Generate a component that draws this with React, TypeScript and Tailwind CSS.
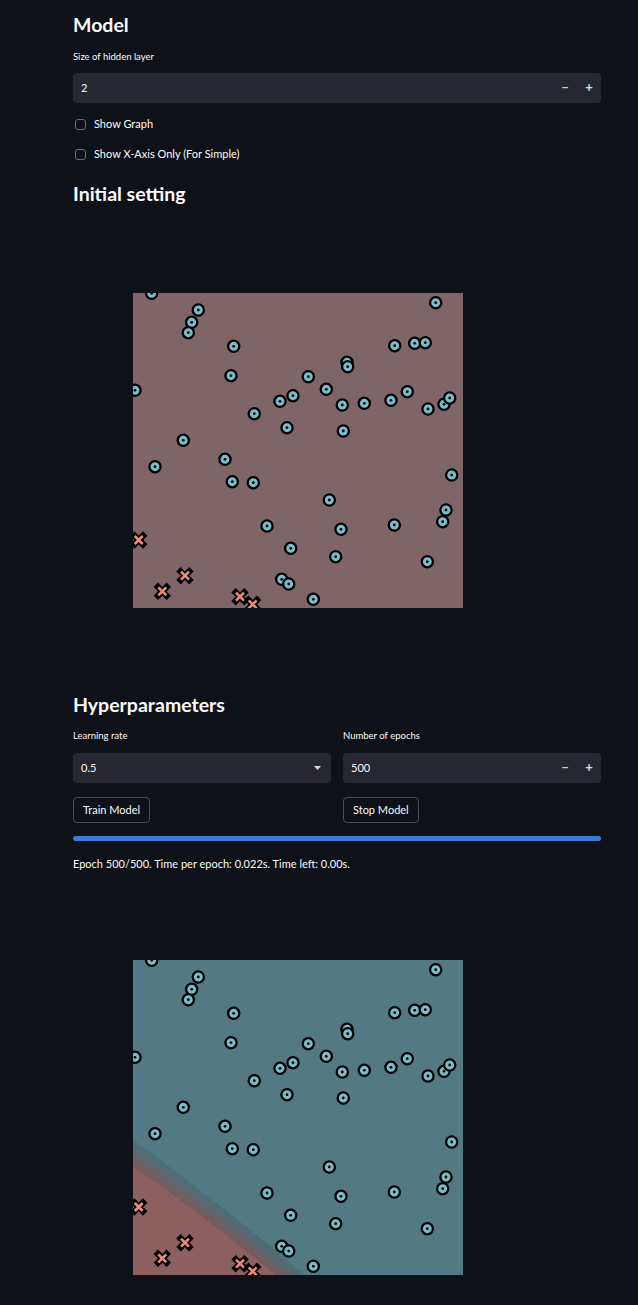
import React from "react";

const CIRCLES: [number, number][] = [
  [151.7, 293.3], [198.3, 310], [191.7, 322.3], [188.3, 332.7], [233.7, 346.3], [231, 375.7],
  [135, 390.3], [435.7, 302.7], [394.7, 345.7], [414.7, 343.3], [425.3, 342.7], [347, 362.3],
  [347.7, 366.7], [308.3, 376.7], [326.3, 389.3], [293, 395.7], [280, 401.3], [254.3, 413.7],
  [342.3, 405], [364.3, 403.3], [391, 400.3], [407.3, 391.7], [428, 409], [444, 404.3],
  [449.7, 398], [287, 427.7], [343.3, 431], [183.3, 440.3], [225, 459.3], [155, 466.7],
  [451.7, 475], [232.3, 481.7], [253.3, 482.7], [329.3, 500], [446, 510], [442.7, 521.7],
  [267, 526], [341, 529.3], [394.3, 525], [290.7, 548.3], [335.7, 556.7], [427.3, 561.7],
  [281.7, 579.3], [288.7, 584], [313.3, 599.3],
];

const CROSSES: [number, number][] = [
  [138.7, 540], [185, 575.7], [162.3, 591.3], [240, 596.7], [252.7, 604.3],
];

const OX = 133;
const OY = 293;

function Markers() {
  return (
    <>
      {CIRCLES.map(([x, y], i) => (
        <g key={"c" + i} transform={`translate(${x - OX} ${y - OY})`}>
          <circle r={5.6} fill="#7bbccb" stroke="#000" strokeWidth={2.3} />
          <circle r={1.4} fill="#000" />
        </g>
      ))}
      {CROSSES.map(([x, y], i) => (
        <g key={"x" + i} transform={`translate(${x - OX} ${y - OY})`}>
          <path d="M-4.3 -4.3 L4.3 4.3 M-4.3 4.3 L4.3 -4.3" stroke="#000" strokeWidth={6.2} strokeLinecap="square" />
          <path d="M-4 -4 L4 4 M-4 4 L4 -4" stroke="#ee8a80" strokeWidth={2.6} strokeLinecap="butt" />
        </g>
      ))}
    </>
  );
}

function lerpColor(a: number[], b: number[], t: number) {
  const c = a.map((v, i) => Math.round(v + (b[i] - v) * t));
  return `rgb(${c[0]},${c[1]},${c[2]})`;
}

function Plot({ trained }: { trained: boolean }) {
  const red = [140, 95, 96];
  const teal = [83, 121, 133];
  const layers = [];
  const lines = [];
  const N = 14;
  for (let i = 0; i <= N; i++) {
    const t = i / N;
    const y0 = 179 + t * 25;
    const x1 = 172 - t * 27;
    const d = `M-2 ${y0} Q ${x1 * 0.5} ${y0 + (315 - y0) * 0.47} ${x1} 316`;
    layers.push(
      <path key={"l" + i} d={`${d} L-2 316 Z`} fill={lerpColor(teal, red, t)} />
    );
    lines.push(
      <path key={"s" + i} d={d} stroke="#34454e" strokeOpacity={0.45} strokeWidth={0.7} fill="none" />
    );
  }
  return (
    <div className="ml-[60px] h-[315px] w-[330px] overflow-hidden">
      <svg width={330} height={315} viewBox="0 0 330 315" className="block">
        {trained ? (
          <>
            <rect width={330} height={315} fill="#537985" />
            {layers}
            {lines}
          </>
        ) : (
          <rect width={330} height={315} fill="#7f6568" />
        )}
        <Markers />
      </svg>
    </div>
  );
}

function Stepper({ value }: { value: string }) {
  return (
    <div className="flex h-[30px] items-center rounded-[4px] bg-[#262730] pl-[8px] text-[11px] text-[#fafafa]">
      <span className="flex-1">{value}</span>
      <span className="w-[24px] text-center text-[13px] font-bold text-[#d0d0d0]">−</span>
      <span className="w-[24px] text-center text-[13px] font-bold text-[#e0e0e0]">+</span>
    </div>
  );
}

function Check({ label }: { label: string }) {
  return (
    <div className="flex h-[14px] items-center gap-[8px]">
      <span className="ml-[2px] h-[11px] w-[11px] rounded-[3px] border border-[#6b6e78]" />
      <span className="text-[11px] text-[#fafafa]">{label}</span>
    </div>
  );
}

export default function App() {
  return (
    <div
      className="min-h-[1305px] w-[638px] bg-[#0e1117] text-[#fafafa]"
      style={{ fontFamily: "Lato, 'Noto Sans', sans-serif" }}
    >
      <div className="flex flex-col pl-[73px] pr-[37px] pt-[13px]">
        <div className="h-[24px] text-[19.5px] font-bold leading-[24px]">Model</div>
        <div className="mt-[14px] h-[12px] text-[9.5px] leading-[12px]">Size of hidden layer</div>
        <div className="mt-[10px]">
          <Stepper value="2" />
        </div>
        <div className="mt-[14px]">
          <Check label="Show Graph" />
        </div>
        <div className="mt-[16px]">
          <Check label="Show X-Axis Only (For Simple)" />
        </div>
        <div className="mt-[21px] h-[24px] text-[19.5px] font-bold leading-[24px]">Initial setting</div>
        <div className="mt-[87px]">
          <Plot trained={false} />
        </div>
        <div className="mt-[85px] h-[24px] text-[19.5px] font-bold leading-[24px]">Hyperparameters</div>
        <div className="mt-[13px] grid grid-cols-2 gap-x-[12px]">
          <div className="flex flex-col">
            <div className="h-[12px] text-[9.5px] leading-[12px]">Learning rate</div>
            <div className="mt-[11px] flex h-[30px] items-center rounded-[4px] bg-[#262730] pl-[8px] pr-[10px] text-[11px]">
              <span className="flex-1">0.5</span>
              <svg width="7" height="4" viewBox="0 0 7 4">
                <path d="M0 0 L7 0 L3.5 4 Z" fill="#d8d8d8" />
              </svg>
            </div>
            <div className="mt-[13px]">
              <button className="h-[26px] rounded-[4px] border border-[#4a4c55] px-[9px] text-[11px] text-[#fafafa]">
                Train Model
              </button>
            </div>
          </div>
          <div className="flex flex-col">
            <div className="h-[12px] text-[9.5px] leading-[12px]">Number of epochs</div>
            <div className="mt-[11px]">
              <Stepper value="500" />
            </div>
            <div className="mt-[13px]">
              <button className="h-[26px] rounded-[4px] border border-[#4a4c55] px-[9px] text-[11px] text-[#fafafa]">
                Stop Model
              </button>
            </div>
          </div>
        </div>
        <div className="mt-[13px] h-[5px] rounded-full bg-[#3a7bd5]" />
        <div className="mt-[16px] h-[14px] text-[11px] leading-[14px]">
          Epoch 500/500. Time per epoch: 0.022s. Time left: 0.00s.
        </div>
        <div className="mt-[89px]">
          <Plot trained={true} />
        </div>
      </div>
    </div>
  );
}
